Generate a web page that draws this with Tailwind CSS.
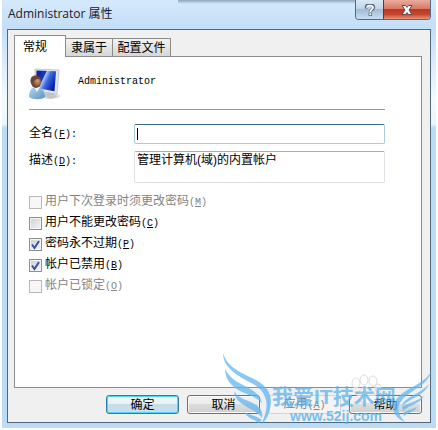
<!DOCTYPE html>
<html lang="zh-CN">
<head>
    <meta charset="UTF-8">
    <meta name="viewport" content="width=device-width, initial-scale=1.0">
    <title>Administrator 属性</title>
    <script src="https://cdn.jsdelivr.net/npm/@tailwindcss/browser@4"></script>
</head>
<body class="bg-white font-['Liberation_Sans','Noto_Sans_CJK_SC',sans-serif] text-xs leading-4 text-black">
    <main class="relative flex min-h-screen flex-col overflow-hidden bg-[linear-gradient(#d5e9fb,#c3def8_28px,#f2fafe_100px,#eaf6fd_124px,#badaf6_128px,#badaf6)] border-x-2 border-b-2 border-white px-[5px] pb-[5px]">

        <!-- Blurred edge of the window behind the glass -->
        <div class="pointer-events-none absolute top-0 right-20 left-44 h-1 bg-linear-to-b from-[#8fa5bb] to-transparent"></div>

        <!-- Title bar -->
        <header class="flex h-[29px] items-start justify-between">
            <h1 class="pt-[6px] pl-px font-['Open_Sans','Noto_Sans_CJK_SC',sans-serif] text-[#16202c]">Administrator 属性</h1>
            <div class="relative flex h-5 overflow-hidden rounded-b border border-t-0 border-[#526a86]">
                <button type="button" aria-label="帮助" class="flex w-[27px] items-center justify-center bg-[linear-gradient(#d9e8f6,#c0d3e6_50%,#a2bbd3_50%,#c8dff2)]">
                    <svg class="h-3 w-3" viewBox="0 0 12 12" fill="none">
                        <path d="M2.500 4.500V3C3-.200 9.500 0 9.500 3.500 9.500 5.500 6.300 5.500 6.300 8.200M6.300 9v3" stroke="#56657a" stroke-width="3.400"/>
                        <path d="M3 3.800C3 .700 9 1 9 3.500 9 5.500 6.300 5.400 6.300 8M6.300 9.300v2" stroke="#fff" stroke-width="1.800"/>
                    </svg>
                </button>
                <button type="button" aria-label="关闭" class="flex w-[47px] items-center justify-center border-l border-[#6d3038] bg-[linear-gradient(#e9aca0,#d97a67_45%,#bd3822_50%,#c6442c_75%,#e39678)]">
                    <svg class="h-3 w-3" viewBox="0 0 12 12">
                        <path d="M1 1.500h3.500L6 3.400l1.500-1.900H11L8 6l3 4.500H7.500L6 8.600l-1.500 1.900H1L4 6z" fill="#fff" stroke="#5f4650"/>
                    </svg>
                </button>
            </div>
        </header>

        <form class="flex flex-1 flex-col border border-[#536777] bg-[#f0f0f0] pt-[5px] pr-2 pl-[6px]">
            <!-- Tabs -->
            <div role="tablist" class="flex items-end">
                <button type="button" role="tab" aria-selected="true" class="relative -mb-px h-[22px] w-[52px] border border-b-0 border-[#8c8c8c] bg-white pr-4 pl-[6px] whitespace-nowrap">常规</button>
                <button type="button" role="tab" aria-selected="false" class="h-[18px] w-[47px] border border-b-0 border-l-0 border-[#8c8c8c] bg-linear-to-b from-[#f3f3f3] to-[#d6d6d6] whitespace-nowrap">隶属于</button>
                <button type="button" role="tab" aria-selected="false" class="h-[18px] w-[58px] border border-b-0 border-l-0 border-[#8c8c8c] bg-linear-to-b from-[#f3f3f3] to-[#d6d6d6] whitespace-nowrap">配置文件</button>
            </div>

            <section role="tabpanel" class="flex-1 border border-[#8c8c8c] bg-white pr-9 pl-[14px]">
                <div class="flex h-[53px] items-start border-b border-[#9b9b9b] pt-[11px]">
                    <svg class="h-8 w-8 shrink-0" viewBox="0 0 32 32" aria-hidden="true">
                        <defs>
                            <linearGradient id="screen" x2="1" y2=".5">
                                <stop stop-color="#071b8e"/>
                                <stop offset=".42" stop-color="#1736c4"/>
                                <stop offset=".46" stop-color="#a9c4f4"/>
                                <stop offset=".65" stop-color="#3c69df"/>
                                <stop offset="1" stop-color="#0822aa"/>
                            </linearGradient>
                            <radialGradient id="face" cx=".65" cy=".4">
                                <stop stop-color="#d3a27b"/>
                                <stop offset="1" stop-color="#75482e"/>
                            </radialGradient>
                            <linearGradient id="shirt" x2="1" y2="1">
                                <stop stop-color="#b4dcf2"/>
                                <stop offset="1" stop-color="#5b91bb"/>
                            </linearGradient>
                        </defs>
                        <ellipse cx="21" cy="28" rx="10" ry="3" fill="#ddd"/>
                        <path d="M17 24l7 1 4 4-7 2-6-3z" fill="#bfc5ca"/>
                        <path d="M6 1l24 1-2 24-22-3z" fill="#e2e7eb" stroke="#b0b8c0" stroke-width=".7"/>
                        <path d="M7.500 2.500l19.500.8-1.500 20L7 20z" fill="url(#screen)"/>
                        <path d="M0 29c0-6 2-10 7-10s9 3 9 10c-3 3-12 3-16 0z" fill="url(#shirt)"/>
                        <path d="M5 19l3 5 3-5z" fill="#eef7fb"/>
                        <ellipse cx="7" cy="14" rx="5" ry="6" fill="url(#face)"/>
                        <path d="M1.500 14C1 9 4 7 7 7.500s5 2 4.500 4C8 10 5 11 3 17z" fill="#6c4632"/>
                    </svg>
                    <span class="pt-[6px] pl-[17px] font-['Liberation_Mono',monospace] text-[10px]">Administrator</span>
                </div>

                <div class="flex items-center pt-[14px]">
                    <label for="fullname" class="w-[105px] shrink-0">全名<span class="font-['Liberation_Mono',monospace] text-[10px]">(<u>F</u>):</span></label>
                    <div class="relative flex min-w-0 flex-1">
                        <input id="fullname" type="text" class="peer h-5 w-full rounded-xs border border-[#a9cbe0] border-t-[#3f6b8c] bg-white px-[2px] caret-transparent outline-none">
                        <span class="pointer-events-none absolute top-1 left-[3px] h-3 w-px bg-black peer-[:not(:placeholder-shown)]:block"></span>
                    </div>
                </div>
                <div class="flex items-start pt-[7px]">
                    <label for="description" class="w-[105px] shrink-0 pt-px">描述<span class="font-['Liberation_Mono',monospace] text-[10px]">(<u>D</u>):</span></label>
                    <textarea id="description" class="h-8 min-w-0 flex-1 resize-none overflow-hidden rounded-xs border border-[#dfe3e8] border-t-[#abadb3] bg-white px-[2px] outline-none">管理计算机(域)的内置帐户</textarea>
                </div>

                <div class="flex flex-col gap-[3px] pt-[10px]">
                    <label class="flex items-center gap-[3px] text-[#838383]">
                        <input type="checkbox" disabled class="h-[13px] w-[13px] appearance-none border border-[#b8b8b8] bg-[#f7f7f7]">
                        <span>用户下次登录时须更改密码<span class="font-['Liberation_Mono',monospace] text-[10px]">(<u>M</u>)</span></span>
                    </label>
                    <label class="flex items-center gap-[3px]">
                        <input type="checkbox" class="h-[13px] w-[13px] appearance-none border border-[#8e8f8f] bg-linear-to-br from-[#cbcfd5] to-[#f6f6f6] shadow-[inset_0_0_0_1px_#f4f4f4]">
                        <span>用户不能更改密码<span class="font-['Liberation_Mono',monospace] text-[10px]">(<u>C</u>)</span></span>
                    </label>
                    <label class="flex items-center gap-[3px]">
                        <span class="grid">
                            <input type="checkbox" checked class="peer col-start-1 row-start-1 h-[13px] w-[13px] appearance-none border border-[#8e8f8f] bg-linear-to-br from-[#cbcfd5] to-[#f6f6f6] shadow-[inset_0_0_0_1px_#f4f4f4]">
                            <svg class="pointer-events-none invisible col-start-1 row-start-1 h-[13px] w-[13px] peer-checked:visible" viewBox="0 0 13 13"><path d="M3 6.500l2.500 3.500L10 3" fill="none" stroke="#3e4f9c" stroke-width="2"/></svg>
                        </span>
                        <span>密码永不过期<span class="font-['Liberation_Mono',monospace] text-[10px]">(<u>P</u>)</span></span>
                    </label>
                    <label class="flex items-center gap-[3px]">
                        <span class="grid">
                            <input type="checkbox" checked class="peer col-start-1 row-start-1 h-[13px] w-[13px] appearance-none border border-[#8e8f8f] bg-linear-to-br from-[#cbcfd5] to-[#f6f6f6] shadow-[inset_0_0_0_1px_#f4f4f4]">
                            <svg class="pointer-events-none invisible col-start-1 row-start-1 h-[13px] w-[13px] peer-checked:visible" viewBox="0 0 13 13"><path d="M3 6.500l2.500 3.500L10 3" fill="none" stroke="#3e4f9c" stroke-width="2"/></svg>
                        </span>
                        <span>帐户已禁用<span class="font-['Liberation_Mono',monospace] text-[10px]">(<u>B</u>)</span></span>
                    </label>
                    <label class="flex items-center gap-[3px] text-[#838383]">
                        <input type="checkbox" disabled class="h-[13px] w-[13px] appearance-none border border-[#b8b8b8] bg-[#f7f7f7]">
                        <span>帐户已锁定<span class="font-['Liberation_Mono',monospace] text-[10px]">(<u>O</u>)</span></span>
                    </label>
                </div>
            </section>

            <footer class="flex justify-end gap-2 pt-[7px] pb-2">
                <button type="submit" class="flex h-[19px] w-[73px] items-center justify-center rounded-[3px] border border-[#2c7fa8] bg-[linear-gradient(#f2f9fc,#e3f1f8_50%,#c9dde8_50%,#c5dfed)] shadow-[inset_0_0_0_1px_#4ed3f7]">确定</button>
                <button type="button" class="flex h-[19px] w-[73px] items-center justify-center rounded-[3px] border border-[#707070] bg-[linear-gradient(#f3f3f3,#ebebeb_50%,#dcdcdc_50%,#cfcfcf)] shadow-[inset_0_0_0_1px_#f8f8f8]">取消</button>
                <button type="button" disabled class="flex h-[19px] w-[73px] items-center justify-center rounded-[3px] border border-[#d0d5d8] bg-[#f4f4f4] text-[#838383]"><span>应用<span class="font-['Liberation_Mono',monospace] text-[10px]">(<u>A</u>)</span></span></button>
                <button type="button" class="flex h-[19px] w-[73px] items-center justify-center rounded-[3px] border border-[#707070] bg-[linear-gradient(#f3f3f3,#ebebeb_50%,#dcdcdc_50%,#cfcfcf)] shadow-[inset_0_0_0_1px_#f8f8f8]">帮助</button>
            </footer>
        </form>

        <!-- Site watermark, lies over the button row -->
        <svg class="pointer-events-none absolute right-0 bottom-0 h-[78px] w-[218px]" viewBox="0 0 218 78">
            <g fill="#fff" fill-opacity=".6" stroke="#dcdcdc">
                <ellipse cx="138" cy="33" rx="4" ry="5"/>
                <ellipse cx="146" cy="30" rx="4" ry="5"/>
                <ellipse cx="155" cy="31" rx="4" ry="5"/>
                <ellipse cx="160" cy="38" rx="3" ry="4"/>
                <path d="M139 46c2-7 8-12 13-7s8 8 5 12-16 3-18-5z"/>
            </g>
            <g fill="#5fb5f1" fill-opacity=".75">
                <path d="M5 3C9 17 22 22 36 29c16 8 20 19 15 34-2 5-4 8-7 11 2-8 6-15 4-24C44 34 31 34 18 24 10 18 5 12 5 3z"/>
                <path d="M7 19c6 12 16 14 27 21 6 4 9 8 10 13-9-9-20-9-28-16-6-5-9-11-9-18z"/>
                <path d="M16 41c6 9 13 8 22 14 6 4 7 8 6 13-5-7-11-8-18-13-7-4-9-8-10-14z"/>
                <path d="M26 62c5 3 11 3 18 8l-3 3c-5-4-11-4-15-11z"/>
                <path d="M213 22c-4 14-19 17-29 28-6 7-4 15 3 22-10-4-15-13-9-22 8-12 27-15 35-28z"/>
                <path d="M211 34c-5 12-17 13-27 22 2-9 17-11 27-22z"/>
                <path d="M206 46c-5 9-14 8-21 15l-1-4c8-5 14-5 22-11z"/>
                <path d="M199 57c-4 6-8 5-13 9l-1-3c4-3 9-3 14-6z"/>
            </g>
            <text x="54" y="54" fill="#52aeec" fill-opacity=".7" font-size="21" font-weight="bold" class="font-['Liberation_Sans','Noto_Sans_CJK_SC',sans-serif]">我爱IT技术网</text>
            <text x="72" y="71" fill="#62b4ec" fill-opacity=".85" font-size="14" font-weight="bold" class="font-['Liberation_Sans',sans-serif]">www.52ij.com</text>
        </svg>
    </main>
</body>
</html>
